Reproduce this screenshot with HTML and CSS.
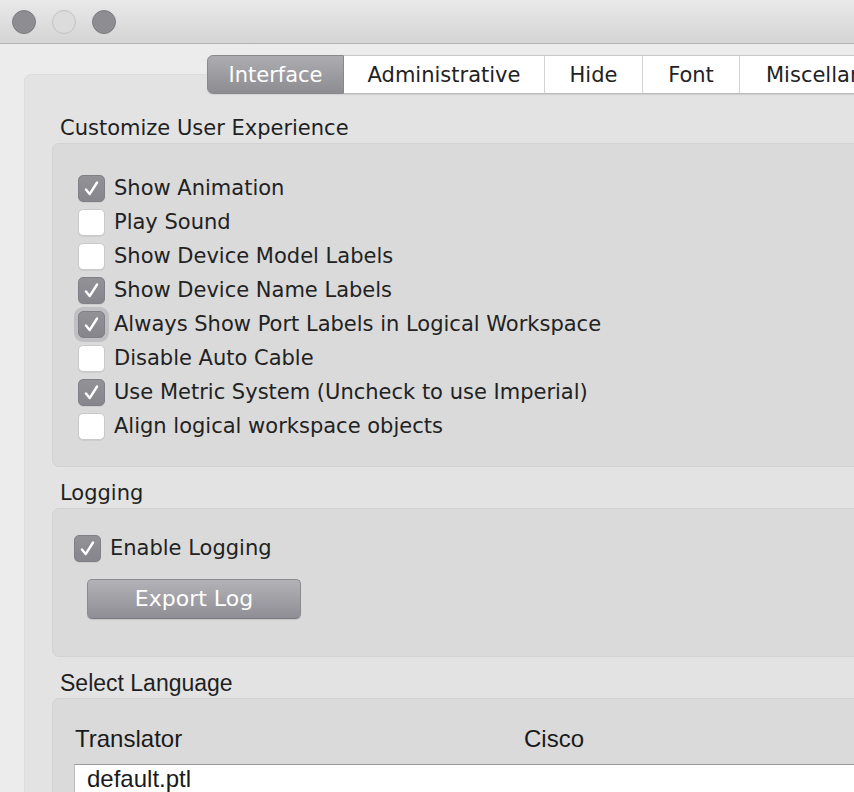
FILE: index.html
```html
<!DOCTYPE html>
<html>
<head>
<meta charset="utf-8">
<link rel="stylesheet" href="styles.css">
</head>
<body>
<div class="window">
  <div class="titlebar">
    <span class="light dark"></span>
    <span class="light pale"></span>
    <span class="light dark"></span>
  </div>
  <div class="content">
    <div class="panel">
      <div class="tabbar">
        <div class="tab selected t1">Interface</div>
        <div class="tab t2">Administrative</div>
        <div class="tab t3">Hide</div>
        <div class="tab t4">Font</div>
        <div class="tab t5">Miscellaneous</div>
      </div>

      <div class="label first">Customize User Experience</div>
      <div class="group g1">
        <div class="row"><span class="box checked"><svg viewBox="0 0 27 27"><path d="M7.5 14.5 L11.5 19.5 L19.5 7"/></svg></span><span class="text">Show Animation</span></div>
        <div class="row"><span class="box"></span><span class="text">Play Sound</span></div>
        <div class="row"><span class="box"></span><span class="text">Show Device Model Labels</span></div>
        <div class="row"><span class="box checked"><svg viewBox="0 0 27 27"><path d="M7.5 14.5 L11.5 19.5 L19.5 7"/></svg></span><span class="text">Show Device Name Labels</span></div>
        <div class="row"><span class="box checked focus"><svg viewBox="0 0 27 27"><path d="M7.5 14.5 L11.5 19.5 L19.5 7"/></svg></span><span class="text">Always Show Port Labels in Logical Workspace</span></div>
        <div class="row"><span class="box"></span><span class="text">Disable Auto Cable</span></div>
        <div class="row"><span class="box checked"><svg viewBox="0 0 27 27"><path d="M7.5 14.5 L11.5 19.5 L19.5 7"/></svg></span><span class="text">Use Metric System (Uncheck to use Imperial)</span></div>
        <div class="row"><span class="box"></span><span class="text">Align logical workspace objects</span></div>
      </div>

      <div class="label">Logging</div>
      <div class="group g2">
        <div class="row"><span class="box checked"><svg viewBox="0 0 27 27"><path d="M7.5 14.5 L11.5 19.5 L19.5 7"/></svg></span><span class="text">Enable Logging</span></div>
        <div class="button">Export Log</div>
      </div>

      <div class="label narrow">Select Language</div>
      <div class="group g3">
        <div class="thead">
          <span class="col1">Translator</span>
          <span class="col2">Cisco</span>
        </div>
        <div class="table">
          <div class="trow">default.ptl</div>
        </div>
      </div>
    </div>
  </div>
</div>
</body>
</html>
```

FILE: styles.css
```css
html, body {
  margin: 0;
  padding: 0;
}
body {
  width: 854px;
  height: 792px;
  overflow: hidden;
  background: #ececec;
  font-family: "DejaVu Sans", "Lucida Grande", sans-serif;
  color: #232323;
}
.window {
  width: 854px;
  height: 792px;
  overflow: hidden;
  background: #ececec;
}
.titlebar {
  height: 43px;
  border-bottom: 1px solid #b3b3b3;
  background: linear-gradient(#e9e9e9, #d4d4d4);
  display: flex;
  align-items: center;
  gap: 16px;
  padding-left: 12px;
}
.light {
  width: 22px;
  height: 22px;
  border-radius: 50%;
  display: block;
  margin-top: 1px;
}
.light.dark {
  background: #8e8d92;
  border: 1px solid #7c7b80;
}
.light.pale {
  background: #dcdcdc;
  border: 1px solid #c3c3c3;
}
.content {
  padding-left: 24px;
  padding-top: 30px;
}
.panel {
  width: 1000px;
  height: 900px;
  background: #e3e3e3;
  border: 1px solid #dcdcdc;
  border-radius: 7px;
}
.tabbar {
  margin-top: -20px;
  margin-left: 182px;
  display: flex;
  height: 39px;
}
.tab {
  box-sizing: border-box;
  background: #ffffff;
  border-top: 1px solid #c9c9c9;
  border-bottom: 1px solid #b9b9b9;
  border-right: 1px solid #d6d6d6;
  font-size: 21px;
  line-height: 38px;
  height: 39px;
  text-align: center;
  color: #222;
  white-space: nowrap;
  box-shadow: 0 1px 1px rgba(0,0,0,0.08);
}
.tab.selected {
  background: linear-gradient(#adacb1, #8d8c91);
  border: 1px solid #8a898e;
  border-radius: 6px 0 0 6px;
  color: #fff;
}
.t1 { width: 137px; }
.t2 { width: 201px; }
.t3 { width: 98px; }
.t4 { width: 97px; }
.t5 { width: 200px; text-align: left; padding-left: 26px; }

.label {
  font-size: 21px;
  line-height: 24px;
  padding-left: 35px;
  margin-top: 14px;
  margin-bottom: 3px;
  color: #1f1f1f;
}
.label.first {
  margin-top: 22px;
}
.label.narrow {
  font-family: "Liberation Sans", Arial, sans-serif;
  font-size: 23px;
}
.group {
  margin-left: 27px;
  background: #dadada;
  border: 1px solid #d2d2d2;
  border-radius: 7px;
}
.g1 {
  padding: 27px 0 23px 25px;
}
.g2 {
  padding: 22px 0 37px 21px;
}
.g3 {
  padding: 28px 0 40px 21px;
  height: 200px;
}
.row {
  height: 34px;
  display: flex;
  align-items: center;
}
.box {
  width: 27px;
  height: 27px;
  box-sizing: border-box;
  border-radius: 5px;
  background: #ffffff;
  border: 1px solid #c9c9c9;
  box-shadow: 0 1px 0 rgba(0,0,0,0.06);
  margin-right: 9px;
  flex: none;
  display: block;
}
.box.checked {
  background: linear-gradient(#939297, #86858b);
  border: 1px solid #807f85;
}
.box.focus {
  box-shadow: 0 0 0 4px rgba(160,160,166,0.45);
}
.box svg {
  display: block;
  width: 25px;
  height: 25px;
}
.box svg path {
  fill: none;
  stroke: #fff;
  stroke-width: 2.6;
  stroke-linecap: round;
  stroke-linejoin: round;
}
.text {
  font-size: 21px;
  line-height: 24px;
  white-space: nowrap;
  color: #222;
}
.button {
  margin-top: 14px;
  margin-left: 13px;
  width: 214px;
  height: 40px;
  box-sizing: border-box;
  border-radius: 5px;
  background: linear-gradient(#b3b2b7, #8f8e94);
  border: 1px solid #8c8b90;
  border-bottom-color: #7a797e;
  color: #fff;
  font-size: 22px;
  line-height: 38px;
  text-align: center;
  box-shadow: 0 1px 1px rgba(0,0,0,0.1);
}
.thead {
  display: flex;
  height: 24px;
  font-family: "Liberation Sans", Arial, sans-serif;
  font-size: 24px;
  line-height: 24px;
  color: #1a1a1a;
}
.col1 {
  width: 449px;
  padding-left: 1px;
}
.table {
  margin-top: 13px;
  background: #ffffff;
  border-top: 1px solid #9a9a9a;
  border-left: 1px solid #bdbdbd;
  height: 100px;
}
.trow {
  font-family: "Liberation Sans", Arial, sans-serif;
  font-size: 24px;
  line-height: 28px;
  padding-left: 12px;
  color: #1a1a1a;
}
```
